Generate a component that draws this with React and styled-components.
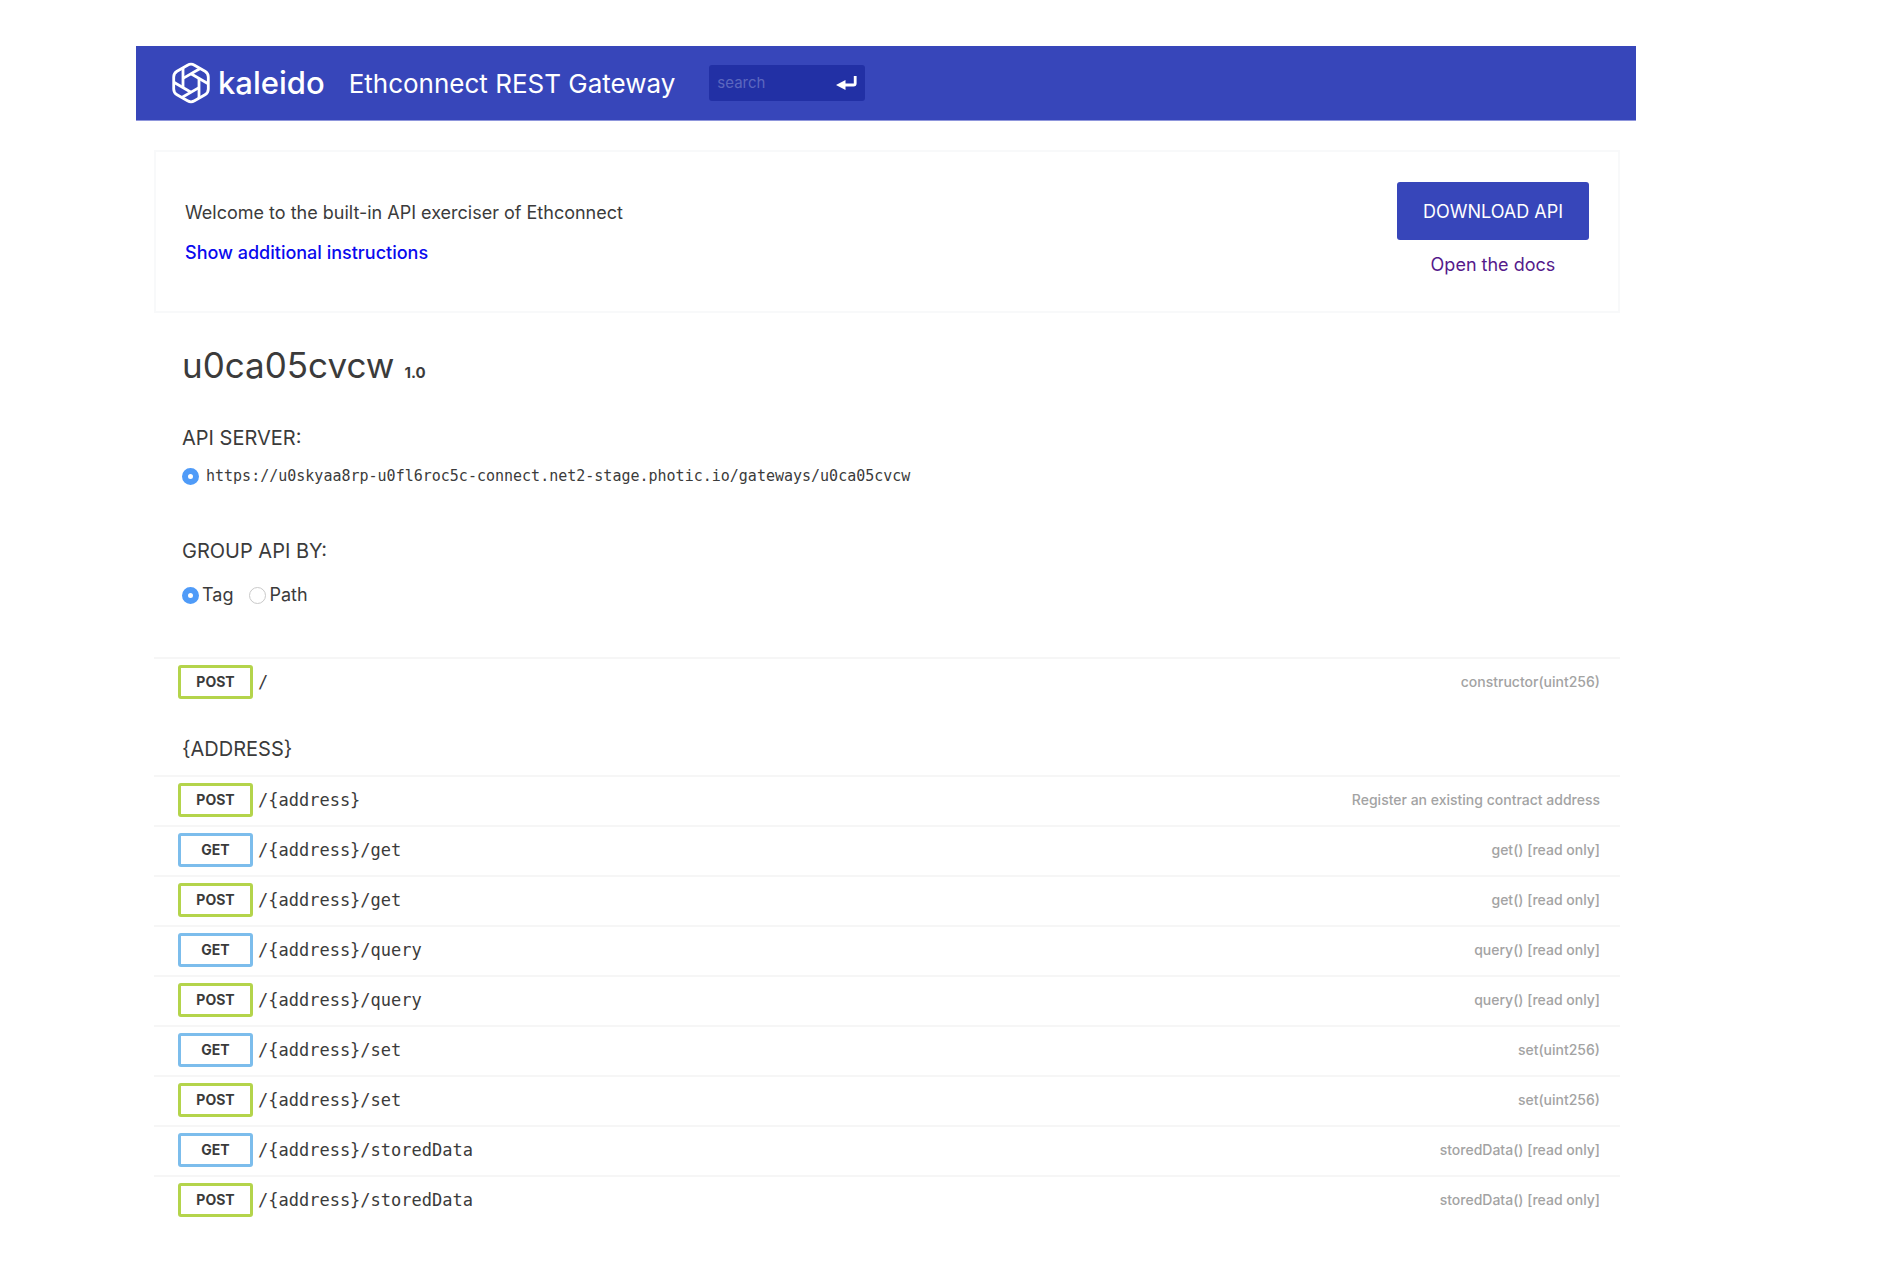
import React, { useState } from "react";
import styled, { createGlobalStyle } from "styled-components";

const sans = '"Inter", "Liberation Sans", sans-serif';
const mono = '"DejaVu Sans Mono", "Liberation Mono", monospace';

const GlobalStyle = createGlobalStyle`
  *, *::before, *::after { box-sizing: border-box; }
  body { margin: 0; background: #fff; color: #3b3b3b; font: 400 18px/24px ${sans}; }
`;

const Page = styled.div`
  padding: 46px 258px 42px 136px;
`;

const Header = styled.header`
  display: flex;
  align-items: center;
  height: 75px;
  padding: 0 36px;
  background: #3746ba;
  border-bottom: 1px solid #8f96dc;
  color: #fff;
`;

const Brand = styled.a`
  display: flex;
  align-items: center;
  gap: 8px;
  color: inherit;
  text-decoration: none;
  font: 500 31px/40px ${sans};
`;

const BrandMark = styled.svg`
  width: 38px;
  height: 42px;
  fill: none;
  stroke: currentColor;
  stroke-width: 2.8;
  stroke-linejoin: round;
`;

const HeaderTitle = styled.h1`
  margin: 0 34px 0 24px;
  padding-top: 2px;
  font-size: 26px;
  line-height: 32px;
  font-weight: 400;
  white-space: nowrap;
`;

const SearchForm = styled.form`
  display: flex;
  align-items: center;
  width: 156px;
  height: 36px;
  padding: 0 8px;
  border-radius: 3px;
  background: #2230a5;
`;

const SearchInput = styled.input`
  flex: 1;
  min-width: 0;
  padding: 0;
  border: 0;
  outline: 0;
  background: transparent;
  color: #fff;
  font: 400 15px/20px ${sans};
  &::placeholder { color: #5c67bf; opacity: 1; }
`;

const SearchButton = styled.button`
  display: flex;
  padding: 0;
  border: 0;
  background: none;
  color: #fff;
  cursor: pointer;
`;

const Content = styled.main`
  padding: 29px 16px 0 18px;
`;

const Welcome = styled.section`
  display: flex;
  justify-content: space-between;
  padding: 30px 29px 34px;
  border: 2px solid #f8f9fa;
`;

const WelcomeText = styled.div`
  display: flex;
  flex-direction: column;
  align-items: flex-start;
  padding-top: 11px;
  line-height: 40px;
`;

const Intro = styled.p`
  margin: 0;
`;

const Actions = styled.div`
  display: flex;
  flex-direction: column;
  align-items: center;
  gap: 13px;
`;

const TextLink = styled.a`
  color: ${(p) => (p.$visited ? "#551a8b" : "#0a0aee")};
  font-weight: ${(p) => (p.$visited ? 400 : 500)};
  text-decoration: none;
`;

const DownloadButton = styled.button`
  height: 58px;
  padding: 2px 26px 0;
  border: 0;
  border-radius: 3px;
  background: #3746ba;
  color: #fff;
  font: 400 18px/24px ${sans};
  cursor: pointer;
`;

const Info = styled.section`
  padding: 28px 28px 50px;
`;

const ApiTitle = styled.h2`
  display: flex;
  align-items: baseline;
  gap: 10px;
  margin: 0 0 27px;
  font-size: 35px;
  line-height: 48px;
  font-weight: 400;
`;

const Version = styled.small`
  font-size: 15px;
  font-weight: 700;
`;

const Group = styled.fieldset`
  min-width: 0;
  margin: 0;
  padding: 0;
  border: 0;
  & + & { margin-top: 49px; }
`;

const GroupTitle = styled.legend`
  padding: 0;
  font-size: 20px;
  line-height: 28px;
`;

const Options = styled.div`
  display: flex;
  gap: 16px;
  margin-top: ${(p) => (p.$tight ? 12 : 18)}px;
`;

const Option = styled.label`
  display: flex;
  align-items: center;
  gap: ${(p) => (p.$code ? 7 : 3)}px;
  font: ${(p) => (p.$code ? `15px/24px ${mono}` : `18px/24px ${sans}`)};
`;

const Radio = styled.input`
  appearance: none;
  width: 17px;
  height: 17px;
  margin: 0;
  border: 1px solid #c9c9c9;
  border-radius: 50%;
  background: #fff;
  &:checked { border: 6px solid #4f9bf8; }
`;

const EndpointList = styled.ul`
  margin: 0;
  padding: 0;
  list-style: none;
`;

const Endpoint = styled.li`
  display: flex;
  align-items: center;
  height: 50px;
  padding: 0 20px 2px 24px;
  border-top: 2px solid #f6f6f6;
`;

const Method = styled.span`
  width: 75px;
  border: 3px solid ${(p) => (p.$method === "GET" ? "#7cbdec" : "#b4d44b")};
  border-radius: 3px;
  font-size: 14px;
  line-height: 28px;
  font-weight: 700;
  text-align: center;
`;

const Path = styled.code`
  flex: 1;
  margin-left: 5px;
  font: 17px/24px ${mono};
`;

const Summary = styled.span`
  color: #a3a3a3;
  font-size: 14px;
  font-weight: 500;
`;

const SectionTitle = styled.h3`
  margin: 0;
  padding: 28px 28px 12px;
  font-size: 20px;
  line-height: 28px;
  font-weight: 400;
`;

const rootEndpoints = [["POST", "/", "constructor(uint256)"]];

const addressEndpoints = [
  ["POST", "/{address}", "Register an existing contract address"],
  ["GET", "/{address}/get", "get() [read only]"],
  ["POST", "/{address}/get", "get() [read only]"],
  ["GET", "/{address}/query", "query() [read only]"],
  ["POST", "/{address}/query", "query() [read only]"],
  ["GET", "/{address}/set", "set(uint256)"],
  ["POST", "/{address}/set", "set(uint256)"],
  ["GET", "/{address}/storedData", "storedData() [read only]"],
  ["POST", "/{address}/storedData", "storedData() [read only]"],
];

function Endpoints({ items }) {
  return (
    <EndpointList>
      {items.map(([method, path, summary]) => (
        <Endpoint key={method + path}>
          <Method $method={method}>{method}</Method>
          <Path>{path}</Path>
          <Summary>{summary}</Summary>
        </Endpoint>
      ))}
    </EndpointList>
  );
}

/* Rounded hexagon with six aperture blades, each a 60 degree turn of the first. */
function KaleidoMark() {
  return (
    <BrandMark viewBox="-19 -21 38 42" aria-hidden="true">
      <path d="M-3.5 -17.8 Q0 -19.8 3.5 -17.8 L14 -11.8 Q17.3 -9.9 17.3 -6 V6 Q17.3 9.9 14 11.8 L3.5 17.8 Q0 19.8 -3.5 17.8 L-14 11.8 Q-17.3 9.9 -17.3 6 V-6 Q-17.3 -9.9 -14 -11.8 Z" />
      {[0, 60, 120, 180, 240, 300].map((angle) => (
        <path key={angle} d="M-8 4.6 V-15.2" transform={`rotate(${angle})`} />
      ))}
    </BrandMark>
  );
}

export default function App() {
  const [groupBy, setGroupBy] = useState("Tag");

  return (
    <>
      <GlobalStyle />
      <Page>
        <Header>
          <Brand href="#">
            <KaleidoMark />
            kaleido
          </Brand>
          <HeaderTitle>Ethconnect REST Gateway</HeaderTitle>
          <SearchForm role="search" onSubmit={(e) => e.preventDefault()}>
            <SearchInput type="text" placeholder="search" aria-label="search" />
            <SearchButton type="submit" aria-label="Submit search">
              <svg width="21" height="16" viewBox="0 0 21 16" aria-hidden="true">
                <path d="M19.2 1 V8.5 Q19.2 10 17.5 10 H7" fill="none" stroke="currentColor" strokeWidth="2.8" />
                <path d="M0 10 L9.5 5 V15 Z" fill="currentColor" />
              </svg>
            </SearchButton>
          </SearchForm>
        </Header>

        <Content>
          <Welcome>
            <WelcomeText>
              <Intro>Welcome to the built-in API exerciser of Ethconnect</Intro>
              <TextLink href="#instructions">Show additional instructions</TextLink>
            </WelcomeText>
            <Actions>
              <DownloadButton type="button">DOWNLOAD API</DownloadButton>
              <TextLink href="#docs" $visited>Open the docs</TextLink>
            </Actions>
          </Welcome>

          <Info>
            <ApiTitle>
              u0ca05cvcw <Version>1.0</Version>
            </ApiTitle>
            <Group>
              <GroupTitle>API SERVER:</GroupTitle>
              <Options $tight>
                <Option $code>
                  <Radio type="radio" name="server" defaultChecked />
                  https://u0skyaa8rp-u0fl6roc5c-connect.net2-stage.photic.io/gateways/u0ca05cvcw
                </Option>
              </Options>
            </Group>
            <Group>
              <GroupTitle>GROUP API BY:</GroupTitle>
              <Options>
                {["Tag", "Path"].map((name) => (
                  <Option key={name}>
                    <Radio
                      type="radio"
                      name="group"
                      checked={groupBy === name}
                      onChange={() => setGroupBy(name)}
                    />
                    {name}
                  </Option>
                ))}
              </Options>
            </Group>
          </Info>

          <Endpoints items={rootEndpoints} />
          <SectionTitle>{"{ADDRESS}"}</SectionTitle>
          <Endpoints items={addressEndpoints} />
        </Content>
      </Page>
    </>
  );
}
